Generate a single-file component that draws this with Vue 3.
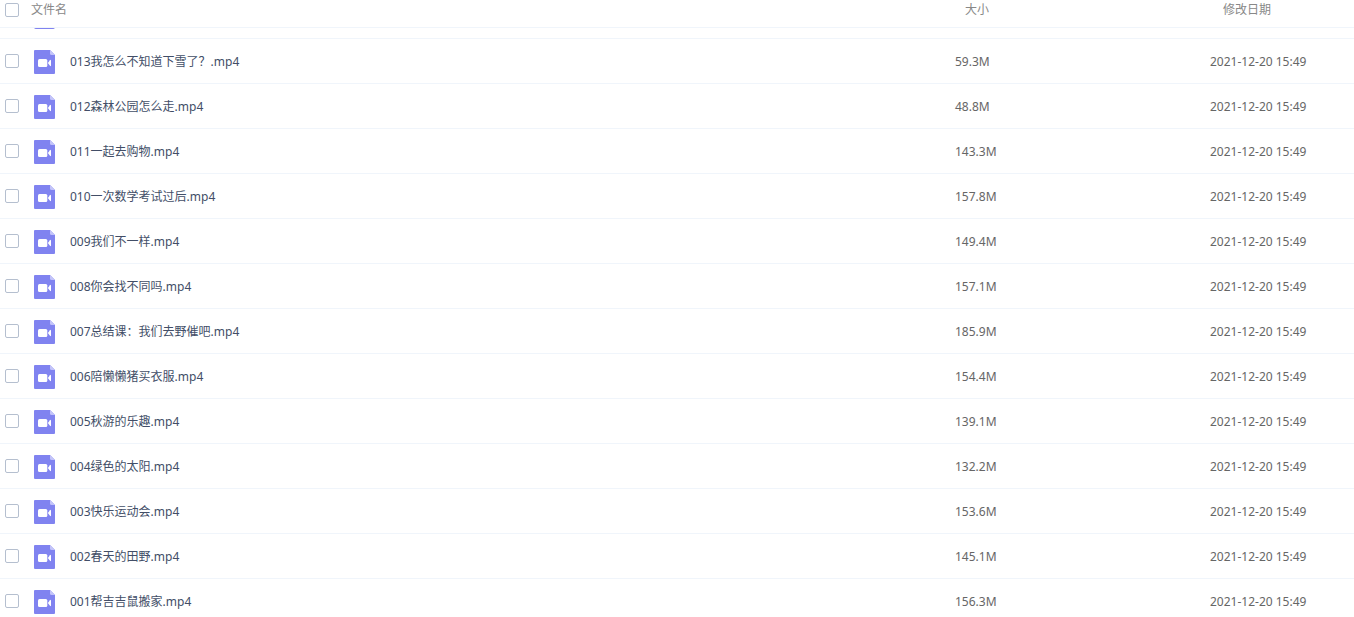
<script setup>
import { ref, computed } from 'vue'

const files = ref(
  [
    ['013我怎么不知道下雪了？.mp4', '59.3M'],
    ['012森林公园怎么走.mp4', '48.8M'],
    ['011一起去购物.mp4', '143.3M'],
    ['010一次数学考试过后.mp4', '157.8M'],
    ['009我们不一样.mp4', '149.4M'],
    ['008你会找不同吗.mp4', '157.1M'],
    ['007总结课：我们去野催吧.mp4', '185.9M'],
    ['006陪懒懒猪买衣服.mp4', '154.4M'],
    ['005秋游的乐趣.mp4', '139.1M'],
    ['004绿色的太阳.mp4', '132.2M'],
    ['003快乐运动会.mp4', '153.6M'],
    ['002春天的田野.mp4', '145.1M'],
    ['001帮吉吉鼠搬家.mp4', '156.3M'],
  ].map(([name, size]) => ({ name, size, date: '2021-12-20 15:49', checked: false }))
)

const allChecked = computed({
  get: () => files.value.every((f) => f.checked),
  set: (v) => files.value.forEach((f) => (f.checked = v)),
})
</script>

<template>
  <main class="page">
    <table class="files">
      <colgroup>
        <col class="col-check" />
        <col />
        <col class="col-size" />
        <col class="col-date" />
      </colgroup>
      <thead>
        <tr>
          <th class="check">
            <input id="check-all" v-model="allChecked" type="checkbox" class="box" />
          </th>
          <th class="head-name"><label for="check-all">文件名</label></th>
          <th class="head-size">大小</th>
          <th class="head-date">修改日期</th>
        </tr>
      </thead>
      <tbody>
        <!-- row scrolled mostly under the header -->
        <tr class="scrolled">
          <td></td>
          <td>
            <div class="peek">
              <svg class="icon" viewBox="0 0 21 24" aria-hidden="true">
                <path d="M2 0H16L21 5V22Q21 24 19 24H2Q0 24 0 22V2Q0 0 2 0Z" fill="#8083f0" />
              </svg>
            </div>
          </td>
          <td></td>
          <td></td>
        </tr>
        <tr v-for="(file, i) in files" :key="file.name" class="row">
          <td class="check">
            <input :id="'file-' + i" v-model="file.checked" type="checkbox" class="box" />
          </td>
          <td>
            <label class="name" :for="'file-' + i">
              <svg class="icon" viewBox="0 0 21 24" aria-hidden="true">
                <path d="M1 0H16L21 5V23Q21 24 20 24H1Q0 24 0 23V1Q0 0 1 0Z" fill="#8083f0" />
                <path d="M16 0L21 5H17.500Q16 5 16 3.500Z" fill="#c3c4fa" />
                <rect x="4" y="9" width="9.300" height="8" rx="1.500" fill="#fff" />
                <path d="M13.800 13L16 10.200Q17 9.300 17 10.200V15.800Q17 16.700 16 15.800Z" fill="#fff" />
              </svg>
              <span>{{ file.name }}</span>
            </label>
          </td>
          <td class="meta">{{ file.size }}</td>
          <td class="meta">{{ file.date }}</td>
        </tr>
      </tbody>
    </table>
  </main>
</template>

<style>
body {
  margin: 0;
  background: #fff;
}
</style>

<style scoped>
.page {
  height: 100vh;
  overflow: hidden;
  font-family: "Noto Sans", "Noto Sans CJK SC", sans-serif;
  font-size: 12px;
  line-height: 18px;
  color: #424e67;
}

.files {
  width: 100%;
  table-layout: fixed;
  border-collapse: separate;
  border-spacing: 0;
}

.col-check {
  width: 30px;
}

.col-size {
  width: 255px;
}

.col-date {
  width: 144px;
}

th,
td {
  box-sizing: border-box;
  padding: 0;
  border-bottom: 1px solid #f0f5fb;
  text-align: left;
  white-space: nowrap;
}

th {
  height: 28px;
  padding-bottom: 7px;
  font-weight: 400;
  color: #888;
}

.head-name {
  padding-left: 1px;
}

.head-size {
  padding-left: 10px;
}

.head-date {
  padding-left: 13px;
}

.row td {
  height: 45px;
}

.check {
  padding-left: 5px;
}

.box {
  display: block;
  appearance: none;
  box-sizing: border-box;
  width: 14px;
  height: 14px;
  margin: 0;
  border: 1px solid #b5bfcf;
  border-radius: 2px;
  background: #fff;
}

.box:checked {
  border-color: #8083f0;
  background: #8083f0;
}

.name {
  display: flex;
  align-items: center;
  gap: 15px;
  padding: 1px 0 0 4px;
}

.icon {
  display: block;
  flex: none;
  width: 21px;
  height: 24px;
}

.peek {
  display: flex;
  align-items: flex-end;
  height: 1px;
  margin-bottom: 9px;
  padding-left: 4px;
  overflow: hidden;
}

.meta {
  padding-top: 2px;
  color: #666;
}
</style>
